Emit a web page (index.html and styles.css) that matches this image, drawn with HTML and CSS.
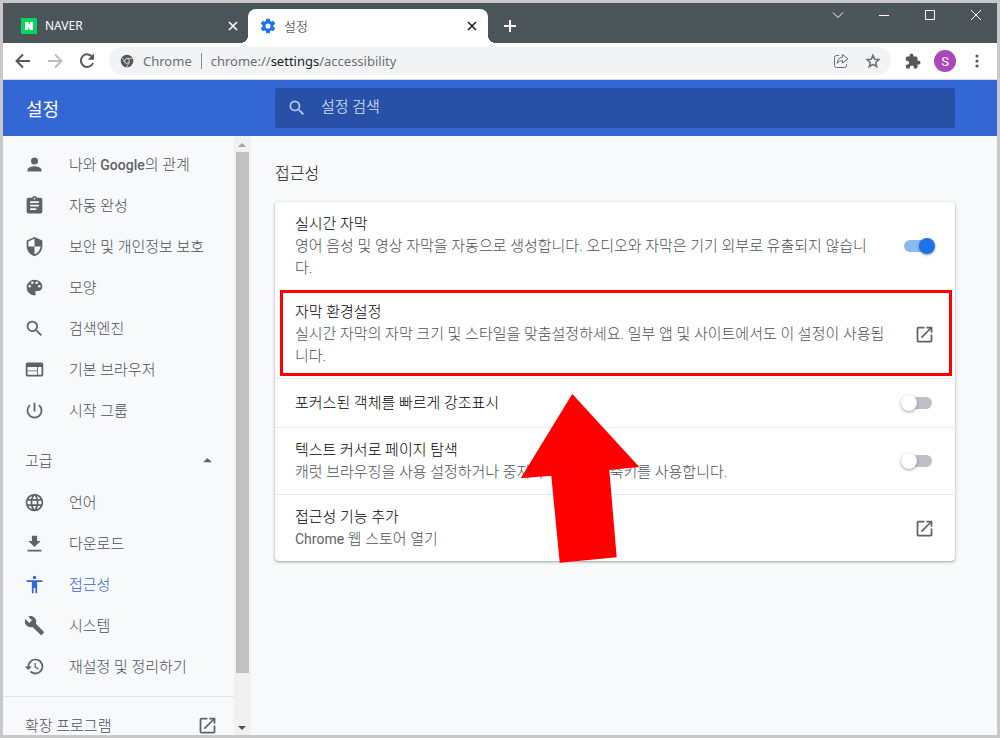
FILE: index.html
```html
<!DOCTYPE html>
<html lang="ko">
<head>
<meta charset="utf-8">
<meta name="viewport" content="width=device-width, initial-scale=1">
<title>설정</title>
<link rel="stylesheet" href="styles.css">
</head>
<body>
<svg class="defs" aria-hidden="true">
  <symbol id="open" viewBox="0 0 24 24"><path d="M19 19H5V5h7V3H5a2 2 0 0 0-2 2v14a2 2 0 0 0 2 2h14c1.100 0 2-.9 2-2v-7h-2v7zM14 3v2h3.590l-9.830 9.830 1.410 1.410L19 6.410V10h2V3h-7z"/></symbol>
  <symbol id="search" viewBox="0 0 24 24"><path d="M15.500 14h-.79l-.28-.27A6.470 6.470 0 0 0 16 9.500 6.500 6.500 0 1 0 9.500 16c1.610 0 3.090-.59 4.230-1.570l.27.28v.79l5 4.990L20.490 19l-4.990-5zm-6 0C7.010 14 5 11.990 5 9.500S7.010 5 9.500 5 14 7.010 14 9.500 11.990 14 9.500 14z"/></symbol>
  <symbol id="close" viewBox="0 0 10 10"><path d="M1 1l8 8M9 1L1 9" fill="none" stroke="currentColor" stroke-width="1.600"/></symbol>
</svg>
<div class="window">
  <header class="titlebar">
    <div class="tabs">
      <div class="tab">
        <svg class="favicon" viewBox="0 0 16 16"><rect width="16" height="16" fill="#06d660"/><path d="M4 4h3.200l2 3V4H12v8H8.900L6.900 9v3H4z" fill="#fff"/></svg>
        <span class="tab-title latin">NAVER</span>
        <button class="tab-close" aria-label="NAVER 탭 닫기"><svg viewBox="0 0 10 10"><use href="#close"/></svg></button>
      </div>
      <div class="tab tab-active">
        <svg class="favicon gear" viewBox="1 1 22 22"><path d="M19.430 12.980c.04-.32.07-.64.07-.98s-.03-.66-.07-.98l2.110-1.650c.19-.15.24-.42.12-.64l-2-3.460c-.12-.22-.39-.3-.61-.22l-2.490 1c-.52-.4-1.080-.73-1.690-.98l-.38-2.650A.488.488 0 0 0 14 2h-4c-.25 0-.46.18-.49.42l-.38 2.650c-.61.25-1.170.59-1.690.98l-2.490-1c-.23-.09-.49 0-.61.22l-2 3.460c-.13.22-.07.49.12.64l2.110 1.650c-.04.32-.07.65-.07.98s.03.66.07.98l-2.110 1.650c-.19.15-.24.42-.12.64l2 3.460c.12.22.39.3.61.22l2.490-1c.52.4 1.080.73 1.690.98l.38 2.650c.03.24.24.42.49.42h4c.25 0 .46-.18.49-.42l.38-2.650c.61-.25 1.170-.59 1.690-.98l2.490 1c.23.09.49 0 .61-.22l2-3.460c.12-.22.07-.49-.12-.64l-2.110-1.650zM12 15.500a3.500 3.500 0 1 1 0-7 3.500 3.500 0 0 1 0 7z"/></svg>
        <span class="tab-title">설정</span>
        <button class="tab-close" aria-label="설정 탭 닫기"><svg viewBox="0 0 10 10"><use href="#close"/></svg></button>
      </div>
      <button class="new-tab" aria-label="새 탭"><svg viewBox="0 0 12 12"><path d="M6 0v12M0 6h12" fill="none" stroke="currentColor" stroke-width="2"/></svg></button>
    </div>
    <div class="controls">
      <button aria-label="탭 검색"><svg viewBox="0 0 12 12"><path d="M1 3.500l5 5 5-5"/></svg></button>
      <button aria-label="최소화"><svg viewBox="0 0 12 12"><path d="M1 6.500h10"/></svg></button>
      <button aria-label="최대화"><svg viewBox="0 0 12 12"><path d="M1.500 1.500h9v9h-9z"/></svg></button>
      <button aria-label="닫기"><svg viewBox="0 0 12 12"><path d="M1 1l10 10M11 1L1 11"/></svg></button>
    </div>
  </header>

  <nav class="toolbar" aria-label="탐색">
    <button aria-label="뒤로"><svg viewBox="0 0 20 20"><path class="line" d="M17 10H4M10 3.500L3.500 10l6.500 6.500"/></svg></button>
    <button class="dim" aria-label="앞으로"><svg viewBox="0 0 20 20"><path class="line" d="M3 10h13M10 3.500l6.500 6.500-6.500 6.500"/></svg></button>
    <button aria-label="새로고침"><svg viewBox="0 0 20 20"><path class="line" d="M15.500 6.300A6.300 6.300 0 1 0 16 12"/><path d="M17 2.500v6.200h-6.200z"/></svg></button>
    <div class="omnibox">
      <svg class="site" viewBox="0 0 14 14"><circle cx="7" cy="7" r="6.300"/><circle cx="7" cy="7" r="2.400" fill="none" stroke="#f1f3f4" stroke-width=".8"/><path d="M7 4.400h5.700M4.700 8.300L2 3.700M9.300 8.300L6.600 13" fill="none" stroke="#f1f3f4" stroke-width=".7"/></svg>
      <span class="site-name">Chrome</span>
      <span class="url">chrome://<b>settings</b>/accessibility</span>
      <button aria-label="공유"><svg viewBox="0 0 20 20"><path class="thin" d="M8 4.500H5.500a2 2 0 0 0-2 2v8a2 2 0 0 0 2 2h8a2 2 0 0 0 2-2V13M11.500 3.500l5.500 4.300-5.500 4.300V9.700c-2.600 0-4.200.8-5.300 2.600.2-3.300 2-5.800 5.300-6.200z"/></svg></button>
      <button aria-label="북마크"><svg viewBox="0 0 20 20"><path class="star" d="M10 4.200l1.700 4 4.200.4-3.200 2.800 1 4.200-3.700-2.300-3.700 2.300 1-4.200-3.200-2.800 4.200-.4z"/></svg></button>
    </div>
    <button aria-label="확장 프로그램"><svg class="puzzle" viewBox="0 0 24 24"><path d="M19.500 11.500H18V8a2 2 0 0 0-2-2h-3.500V4.500a2.500 2.500 0 0 0-5 0V6H4.500A2 2 0 0 0 2.500 8v3.500H4a2.700 2.700 0 0 1 0 5.400H2.500V20a2 2 0 0 0 2 2h3.300v-1.400a2.700 2.700 0 0 1 5.400 0V22H16a2 2 0 0 0 2-2v-3.500h1.500a2.500 2.500 0 0 0 0-5z"/></svg></button>
    <button class="avatar" aria-label="프로필">S</button>
    <button aria-label="메뉴"><svg viewBox="0 0 20 20"><circle cx="10" cy="5" r="1.600"/><circle cx="10" cy="10" r="1.600"/><circle cx="10" cy="15" r="1.600"/></svg></button>
  </nav>

  <div class="banner">
    <h1>설정</h1>
    <label class="search">
      <svg viewBox="0 0 24 24"><use href="#search"/></svg>
      <input type="search" placeholder="설정 검색" aria-label="설정 검색">
    </label>
  </div>

  <div class="body">
    <aside class="sidebar">
      <nav class="menu" aria-label="설정 메뉴">
        <a href="#people"><svg viewBox="0 0 24 24"><path d="M12 12a4 4 0 1 0 0-8 4 4 0 0 0 0 8zm0 2c-2.670 0-8 1.340-8 4v2h16v-2c0-2.660-5.330-4-8-4z"/></svg><span>나와 <b class="latin">Google</b>의 관계</span></a>
        <a href="#autofill"><svg viewBox="0 0 24 24"><path d="M19 3h-4.180a3 3 0 0 0-5.640 0H5a2 2 0 0 0-2 2v14a2 2 0 0 0 2 2h14a2 2 0 0 0 2-2V5a2 2 0 0 0-2-2zm-7 0a1 1 0 1 1 0 2 1 1 0 0 1 0-2zm2 14H7v-2h7v2zm3-4H7v-2h10v2zm0-4H7V7h10v2z"/></svg><span>자동 완성</span></a>
        <a href="#privacy"><svg viewBox="0 0 24 24"><path d="M12 1L3 5v6c0 5.550 3.840 10.740 9 12 5.160-1.260 9-6.450 9-12V5l-9-4zm0 10.990h7c-.53 4.120-3.280 7.790-7 8.940V12H5V6.300l7-3.110v8.800z"/></svg><span>보안 및 개인정보 보호</span></a>
        <a href="#appearance"><svg viewBox="0 0 24 24"><path d="M12 3a9 9 0 0 0 0 18c.83 0 1.500-.67 1.500-1.500 0-.39-.15-.74-.39-1.010-.23-.26-.38-.61-.38-.99 0-.83.67-1.500 1.500-1.500H16c2.760 0 5-2.240 5-5 0-4.420-4.030-8-9-8zm-5.500 9a1.500 1.500 0 1 1 0-3 1.500 1.500 0 0 1 0 3zm3-4a1.500 1.500 0 1 1 0-3 1.500 1.500 0 0 1 0 3zm5 0a1.500 1.500 0 1 1 0-3 1.500 1.500 0 0 1 0 3zm3 4a1.500 1.500 0 1 1 0-3 1.500 1.500 0 0 1 0 3z"/></svg><span>모양</span></a>
        <a href="#engine"><svg viewBox="0 0 24 24"><use href="#search"/></svg><span>검색엔진</span></a>
        <a href="#browser"><svg viewBox="0 0 24 24"><path d="M20 4H4a2 2 0 0 0-2 2v12a2 2 0 0 0 2 2h16a2 2 0 0 0 2-2V6a2 2 0 0 0-2-2zm-5 14H4v-4h11v4zm0-5H4V9h11v4zm5 5h-4V9h4v9z"/></svg><span>기본 브라우저</span></a>
        <a href="#startup"><svg viewBox="0 0 24 24"><path d="M13 3h-2v10h2V3zm4.830 2.170l-1.420 1.420A6.920 6.920 0 0 1 19 12a7 7 0 1 1-11.420-5.420L6.170 5.170A8.930 8.930 0 0 0 3 12a9 9 0 1 0 14.830-6.830z"/></svg><span>시작 그룹</span></a>
        <button class="advanced" aria-expanded="true"><span>고급</span><svg viewBox="0 0 24 24"><path d="M7 14l5-5 5 5z"/></svg></button>
        <a href="#languages"><svg viewBox="0 0 24 24"><path d="M11.990 2a10 10 0 1 0 .01 20 10 10 0 0 0-.01-20zm6.930 6h-2.950a15.650 15.650 0 0 0-1.380-3.560A8.030 8.030 0 0 1 18.920 8zM12 4.040c.83 1.200 1.480 2.530 1.910 3.960h-3.820c.43-1.430 1.080-2.760 1.910-3.960zM4.260 14a8.200 8.200 0 0 1 0-4h3.380a16.500 16.500 0 0 0 0 4H4.260zm.82 2h2.950c.32 1.250.78 2.450 1.380 3.560A7.990 7.990 0 0 1 5.080 16zm2.950-8H5.080a7.990 7.990 0 0 1 4.330-3.560A15.650 15.650 0 0 0 8.030 8zM12 19.960c-.83-1.200-1.480-2.530-1.910-3.960h3.820c-.43 1.430-1.080 2.760-1.910 3.960zM14.340 14H9.660a14.700 14.700 0 0 1 0-4h4.680a14.700 14.700 0 0 1 0 4zm.25 5.560c.6-1.110 1.060-2.310 1.380-3.560h2.950a8.030 8.030 0 0 1-4.330 3.560zM16.360 14a16.500 16.500 0 0 0 0-4h3.380a8.200 8.200 0 0 1 0 4h-3.380z"/></svg><span>언어</span></a>
        <a href="#downloads"><svg viewBox="0 0 24 24"><path d="M19 9h-4V3H9v6H5l7 7 7-7zM4 19v2h16v-2z"/></svg><span>다운로드</span></a>
        <a class="selected" href="#accessibility" aria-current="page"><svg viewBox="0 0 24 24"><path d="M12 2a2 2 0 1 1 0 4 2 2 0 0 1 0-4zm9 7h-6v13h-2v-6h-2v6H9V9H3V7h18v2z"/></svg><span>접근성</span></a>
        <a href="#system"><svg viewBox="0 0 24 24"><path d="M22.700 19l-9.100-9.100c.9-2.300.4-5-1.500-6.900-2-2-5-2.400-7.400-1.300L9 6 6 9 1.600 4.700C.4 7.100.9 10.100 2.900 12.100c1.900 1.900 4.600 2.400 6.900 1.500l9.100 9.100c.4.4 1 .4 1.400 0l2.300-2.300c.5-.4.5-1.100.1-1.400z"/></svg><span>시스템</span></a>
        <a href="#reset"><svg viewBox="0 0 24 24"><path d="M13 3a9 9 0 0 0-9 9H1l3.890 3.890.07.14L9 12H6a7 7 0 1 1 2.060 4.940l-1.420 1.420A9 9 0 1 0 13 3zm-1 5v5l4.280 2.540.72-1.210-3.500-2.080V8H12z"/></svg><span>재설정 및 정리하기</span></a>
        <a class="extensions" href="#extensions"><span>확장 프로그램</span><svg viewBox="0 0 24 24"><use href="#open"/></svg></a>
      </nav>
      <div class="scrollbar" aria-hidden="true">
        <svg class="up" viewBox="0 0 16 16"><path d="M4 11l4-4 4 4z"/></svg>
        <div class="thumb"></div>
        <svg viewBox="0 0 16 16"><path d="M4 7l4 4 4-4z"/></svg>
      </div>
    </aside>

    <main class="content">
      <h2>접근성</h2>
      <section class="card">
        <div class="row">
          <label class="text" for="live"><span class="name">실시간 자막</span><span class="desc">영어 음성 및 영상 자막을 자동으로 생성합니다. 오디오와 자막은 기기 외부로 유출되지 않습니다.</span></label>
          <input class="toggle" id="live" type="checkbox" checked>
        </div>
        <a class="row highlighted" href="#captions">
          <span class="text"><span class="name">자막 환경설정</span><span class="desc">실시간 자막의 자막 크기 및 스타일을 맞춤설정하세요. 일부 앱 및 사이트에서도 이 설정이 사용됩니다.</span></span>
          <svg viewBox="0 0 24 24"><use href="#open"/></svg>
        </a>
        <div class="row divided">
          <label class="text" for="focus"><span class="name">포커스된 객체를 빠르게 강조표시</span></label>
          <input class="toggle" id="focus" type="checkbox">
        </div>
        <div class="row divided">
          <label class="text" for="caret"><span class="name">텍스트 커서로 페이지 탐색</span><span class="desc">캐럿 브라우징을 사용 설정하거나 중지하려면 F7 단축키를 사용합니다.</span></label>
          <input class="toggle" id="caret" type="checkbox">
        </div>
        <a class="row divided" href="#store">
          <span class="text"><span class="name">접근성 기능 추가</span><span class="desc"><span class="latin">Chrome</span> 웹 스토어 열기</span></span>
          <svg viewBox="0 0 24 24"><use href="#open"/></svg>
        </a>
        <svg class="arrow" viewBox="0 0 120 171" aria-hidden="true"><path d="M52.300 1L119.300 74 89.300 77 96.700 164.300 39.700 169.700 31.300 82.700.7 85.300z"/></svg>
      </section>
    </main>
  </div>
</div>
</body>
</html>
```
FILE: styles.css
```css
* { box-sizing: border-box; }

body {
  margin: 0;
  font-family: Roboto, "Noto Sans CJK KR", sans-serif;
  font-size: 15px;
  font-weight: 300;
  color: #4b4f54;
}

button {
  padding: 0;
  border: 0;
  background: none;
  color: inherit;
  font: inherit;
}

a { color: inherit; text-decoration: none; }
svg { display: block; flex: none; fill: currentColor; }
.defs { display: none; }
.latin { font-size: 14px; font-weight: 400; color: #5f6368; }

.window {
  display: flex;
  flex-direction: column;
  height: 100vh;
  border: 3px solid #c8c8c8;
  background: #f8f9fb;
}

/* Title bar */
.titlebar {
  display: flex;
  justify-content: space-between;
  height: 40px;
  flex: none;
  background: #4c555a;
  color: #fff;
}

.tabs { display: flex; align-items: flex-end; }

.tab {
  display: flex;
  align-items: center;
  gap: 8px;
  width: 245px;
  height: 34px;
  padding: 0 10px 0 18px;
  font-size: 13px;
}

.tab .latin { color: #fff; font-family: "Noto Sans", sans-serif; font-size: 12px; }

.tab-active {
  position: relative;
  width: 240px;
  padding: 0 11px 0 12px;
  border-radius: 8px 8px 0 0;
  background: #fff;
  color: #202124;
}

.tab-active::before,
.tab-active::after {
  content: "";
  position: absolute;
  bottom: 0;
  width: 8px;
  height: 8px;
}

.tab-active::before { left: -8px; background: radial-gradient(circle at 0 0, #4c555a 8px, #fff 8px); }
.tab-active::after { right: -8px; background: radial-gradient(circle at 100% 0, #4c555a 8px, #fff 8px); }

.favicon { width: 16px; height: 16px; }
.gear { color: #1a73e8; }
.tab-title { flex: 1; padding-bottom: 2px; }
.tab-close svg { width: 10px; height: 10px; }
.new-tab { align-self: flex-end; padding: 11px 16px; }
.new-tab svg { width: 12px; height: 12px; }

.controls {
  display: flex;
  align-items: flex-start;
  gap: 34px;
  padding: 6px 15px;
}

.controls svg {
  width: 12px;
  height: 12px;
  fill: none;
  stroke: #fff;
}

/* Toolbar */
.toolbar {
  display: flex;
  align-items: center;
  gap: 12px;
  height: 37px;
  flex: none;
  padding: 0 10px;
  border-bottom: 1px solid #d5d8dc;
  background: #fff;
  color: #55595e;
}

.toolbar button { width: 20px; height: 20px; }
.toolbar button svg { width: 20px; height: 20px; }
.toolbar .puzzle { width: 18px; height: 18px; margin: 0 auto; }
.toolbar .dim { color: #b9bbbe; }
.line { fill: none; stroke: currentColor; stroke-width: 2; }
.thin { fill: none; stroke: currentColor; stroke-width: 1; }
.star { fill: none; stroke: currentColor; stroke-width: 1.5; }

.omnibox {
  display: flex;
  align-items: center;
  gap: 9px;
  flex: 1;
  height: 28px;
  padding: 0 8px 0 11px;
  border-radius: 14px;
  background: #f1f3f4;
  color: #6a6e73;
  font-family: "Noto Sans", sans-serif;
  font-size: 13px;
  font-weight: 400;
}

.omnibox button + button { margin-left: 3px; }
.site { width: 14px; height: 14px; color: #55595e; }
.site-name { padding-right: 9px; border-right: 1px solid #8b8f94; line-height: 16px; }
.url { flex: 1; }
.url b { color: #202124; font-weight: 400; }

.toolbar .avatar {
  width: 22px;
  height: 22px;
  margin: 0 -1px;
  border-radius: 50%;
  background: #ab47bc;
  color: #fff;
  font-size: 13px;
  font-weight: 400;
}

/* Settings banner */
.banner {
  display: flex;
  align-items: center;
  height: 56px;
  flex: none;
  padding: 0 42px 0 23px;
  background: #3367d6;
  color: #fff;
}

h1 { width: 249px; margin: 0; font-size: 18px; font-weight: 400; }

.search {
  display: flex;
  align-items: center;
  gap: 14px;
  flex: 1;
  height: 40px;
  padding: 0 12px;
  border-radius: 2px;
  background: #2850a7;
  color: #b9c8e8;
}

.search svg { width: 20px; height: 20px; }

.search input {
  flex: 1;
  padding: 0 0 2px;
  border: 0;
  outline: 0;
  background: none;
  color: #fff;
  font: inherit;
  font-weight: 400;
}

.search input::placeholder { color: #b9c8e8; }

.body { display: flex; flex: 1; min-height: 0; }

/* Sidebar */
.sidebar { display: flex; width: 248px; overflow: hidden; }

.menu {
  display: flex;
  flex-direction: column;
  flex: 1;
  padding-top: 8px;
  overflow: hidden;
}

.menu a,
.advanced {
  display: flex;
  align-items: center;
  gap: 24px;
  height: 41px;
  flex: none;
  padding: 0 16px 0 21px;
}

.menu span { padding-bottom: 2px; }
.menu svg { width: 21px; height: 21px; color: #5f6368; }
.menu b { font-weight: 500; }
.menu .selected,
.menu .selected svg { color: #3367d6; }

.menu .advanced { justify-content: space-between; height: 51px; padding: 8px 16px 0 22px; }

.menu .extensions {
  justify-content: space-between;
  height: 58px;
  margin-top: 9px;
  padding-left: 22px;
  border-top: 1px solid #e2e4e7;
}

.scrollbar {
  display: flex;
  flex-direction: column;
  width: 17px;
  background: #f1f1f1;
  color: #505050;
}

.scrollbar svg { width: 16px; height: 16px; }
.scrollbar .up { color: #a3a3a3; }
.thumb { flex: none; height: 87%; margin: 0 2px; background: #c1c1c1; }
.scrollbar svg:last-child { margin-top: auto; }

/* Content */
.content { flex: 1; padding: 26px 42px 0 24px; }

h2 { margin: 0 0 16px; color: #111214; font-size: 16px; font-weight: inherit; line-height: 24px; }

.card {
  position: relative;
  border-radius: 4px;
  background: #fff;
  box-shadow: 0 1px 2px rgba(60, 64, 67, .3), 0 1px 3px 1px rgba(60, 64, 67, .15);
}

.row {
  display: flex;
  align-items: center;
  justify-content: space-between;
  gap: 20px;
  padding: 11px 20px;
  line-height: 22px;
}

.row > svg { width: 21px; height: 21px; color: #5f6368; }
.divided { border-top: 1px solid #e8eaed; }
.row.divided { min-height: 49px; }
.text { flex: 1; }
.name, .desc { display: block; }
.name { color: #000; }

.highlighted { position: relative; }

.highlighted::after {
  content: "";
  position: absolute;
  inset: 0 3px 2px 5px;
  border: 3px solid #f00;
}

.toggle {
  position: relative;
  appearance: none;
  width: 34px;
  height: 16px;
  flex: none;
  margin: 0;
}

.toggle::before {
  content: "";
  position: absolute;
  inset: 2px 3px;
  border-radius: 6px;
  background: #bdc1c6;
}

.toggle::after {
  content: "";
  position: absolute;
  left: 0;
  width: 16px;
  height: 16px;
  border-radius: 50%;
  background: #fff;
  box-shadow: 0 1px 3px rgba(0, 0, 0, .4);
}

.toggle:checked::before { background: #8cb8f3; }
.toggle:checked::after { left: 18px; background: #1a73e8; }

.arrow {
  position: absolute;
  top: 191px;
  left: 245px;
  width: 120px;
  height: 171px;
  color: #f00;
}
```
